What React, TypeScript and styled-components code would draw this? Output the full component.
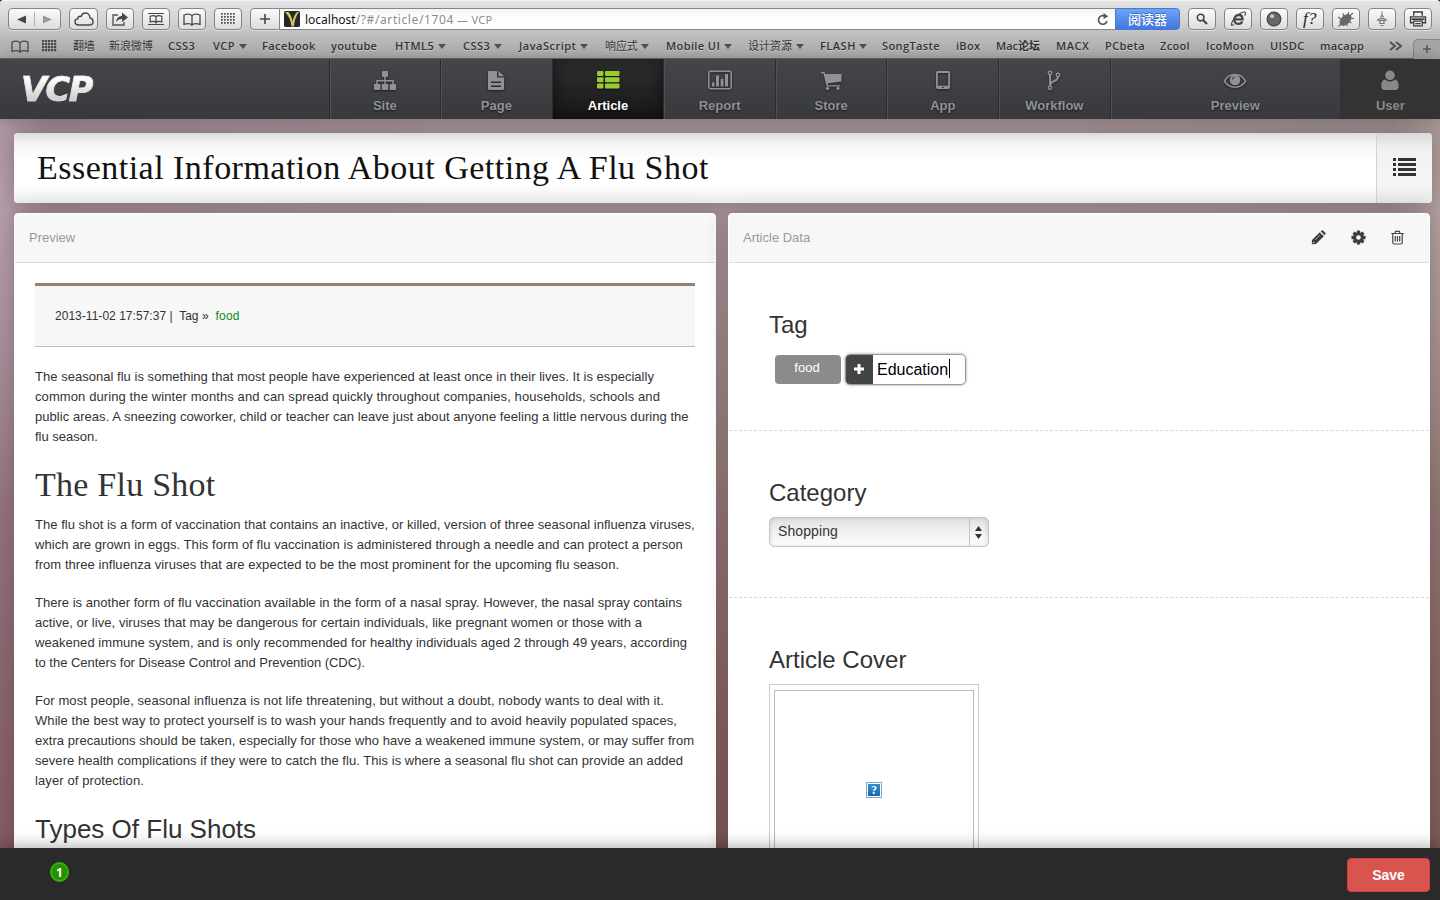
import React from "react";
import styled, { createGlobalStyle, css } from "styled-components";

const GlobalStyle = createGlobalStyle`
  * { box-sizing: border-box; }
  body { margin: 0; background: #2a2a2a; font-family: "Liberation Sans", Helvetica, Arial, sans-serif; color: #333; overflow: hidden; }
  svg { display: block; }
`;

const Page = styled.div`
  width: 1440px;
  height: 900px;
  display: flex;
  flex-direction: column;
  overflow: hidden;
`;

/* ---------- browser chrome ---------- */
const Chrome = styled.div`
  height: 59px;
  flex: none;
  background: linear-gradient(#e6e6e6 0, #d2d2d2 22px, #b9b9b9 38px, #adadad 57px);
  border-bottom: 1px solid #66676a;
  border-radius: 4px 4px 0 0;
  box-shadow: inset 0 1px #f2f2f2;
`;
const Toolbar = styled.div`
  height: 36px;
  padding: 8px 8px 0;
  display: flex;
  align-items: flex-start;
`;
const ToolButton = styled.div<{ $w?: number; $gap?: number }>`
  width: ${(p) => p.$w ?? 28}px;
  height: 22px;
  margin-right: ${(p) => p.$gap ?? 8}px;
  flex: none;
  display: flex;
  align-items: center;
  justify-content: center;
  border: 1px solid #858585;
  border-radius: 4px;
  background: linear-gradient(#fbfbfb, #dcdcdc);
  box-shadow: 0 1px rgba(255, 255, 255, 0.45);
  color: #444;
`;
const NavHalf = styled.div`
  flex: 1;
  height: 14px;
  display: flex;
  align-items: center;
  justify-content: center;
  & + & { border-left: 1px solid #b0b0b0; }
`;
const AddButton = styled(ToolButton)`
  border-radius: 4px 0 0 4px;
`;
const Address = styled.div`
  flex: 1;
  height: 22px;
  display: flex;
  align-items: center;
  padding: 0 6px 0 4px;
  border-top: 1px solid #858585;
  border-bottom: 1px solid #858585;
  background: linear-gradient(#f4f4f4, #fff 50%);
  font: 12px "Noto Sans", "Open Sans", sans-serif;
  color: #8c8c8c;
  white-space: pre;
`;
const Host = styled.span`
  color: #111;
  margin-left: 5px;
`;
const Path = styled.span<{ $small?: boolean }>`
  flex: ${(p) => (p.$small ? 1 : "none")};
  font-size: ${(p) => (p.$small ? 11 : 12)}px;
  letter-spacing: ${(p) => (p.$small ? 0.3 : 0.6)}px;
`;
const Reader = styled.div`
  width: 65px;
  height: 22px;
  margin-right: 8px;
  border: 1px solid #4a78cc;
  border-radius: 0 4px 4px 0;
  background: linear-gradient(#6ea3f5, #3f78e0);
  color: #fff;
  font: 500 13px/20px "Noto Sans CJK SC", sans-serif;
  text-align: center;
  text-shadow: 0 -1px rgba(30, 60, 140, 0.5);
`;
const Bookmarks = styled.div`
  height: 22px;
  display: flex;
  padding-left: 11px;
  font: 600 11px/20px "Open Sans", "Noto Sans CJK SC", sans-serif;
  color: #333;
  text-shadow: 0 1px rgba(255, 255, 255, 0.4);
`;
const Bookmark = styled.div<{ $w: number; $ls?: number; $cjk?: boolean }>`
  width: ${(p) => p.$w}px;
  flex: none;
  display: flex;
  align-items: center;
  height: 20px;
  white-space: nowrap;
  font-weight: ${(p) => (p.$cjk ? 400 : 600)};
  letter-spacing: ${(p) => p.$ls ?? 0.2}px;
`;
const Caret = styled.span`
  margin-left: 3.5px;
  border: 4px solid transparent;
  border-top: 5px solid #505050;
  border-bottom: 0;
`;
const NewTab = styled.div`
  flex: 1;
  height: 20px;
  margin-top: 3px;
  padding-bottom: 2px;
  border: 1px solid #858585;
  border-right: 0;
  border-bottom: 0;
  border-radius: 5px 0 0 0;
  background: #a5a5a5;
  display: flex;
  align-items: center;
  justify-content: center;
`;

/* ---------- application header ---------- */
const Header = styled.header`
  height: 60px;
  flex: none;
  display: flex;
  background: linear-gradient(#454649, #38393c);
  position: relative;
  z-index: 2;
  box-shadow: 0 0 14px rgba(0, 0, 0, 0.25);
`;
const Brand = styled.div`
  width: 328.5px;
  padding: 6px 0 0 21px;
`;
const Logo = styled.span`
  display: inline-block;
  font: italic 700 33.5px/50px "DejaVu Sans", sans-serif;
  letter-spacing: -1.4px;
  padding-right: 6px;
  color: transparent;
  background: linear-gradient(#fff 13px, #c4c4c4 39px);
  background-clip: text;
  -webkit-background-clip: text;
  -webkit-text-stroke: 0.6px rgba(230, 230, 230, 0.9);
`;
const NavItem = styled.div<{ $w?: number; $shift?: number; $active?: boolean; $user?: boolean }>`
  width: ${(p) => p.$w ?? 111.6}px;
  flex: none;
  display: flex;
  flex-direction: column;
  align-items: center;
  padding: 11px 0 0 ${(p) => p.$shift ?? 0}px;
  border-left: 1px solid #2b2c2e;
  box-shadow: inset 1px 0 #505154;
  color: #909198;
  font-size: 13px;
  font-weight: 700;
  text-shadow: 0 1px 2px rgba(0, 0, 0, 0.6);
  svg { filter: drop-shadow(0 1px 1px rgba(0, 0, 0, 0.5)); }
  span { line-height: 16px; margin-top: 6px; }
  ${(p) =>
    p.$active &&
    css`
      background: linear-gradient(#303032, #171718);
      box-shadow: inset 0 0 16px rgba(0, 0, 0, 0.55);
      color: #9c3;
      span { color: #fff; }
    `}
  ${(p) =>
    p.$user &&
    css`
      background: #333;
      border-left-color: #333;
      box-shadow: none;
      color: #888;
      text-shadow: none;
      svg { filter: none; }
    `}
`;

/* ---------- workspace ---------- */
const Workspace = styled.main`
  height: 729px;
  flex: none;
  padding: 14px 8px 0 14px;
  overflow: hidden;
  background:
    radial-gradient(ellipse 50px 300px at 0 90px, rgba(196, 176, 194, 0.55), transparent),
    radial-gradient(ellipse 50px 300px at 1440px 90px, rgba(190, 172, 172, 0.6), transparent),
    linear-gradient(90deg, rgba(140, 95, 135, 0.24), transparent 30%, transparent 75%, rgba(110, 100, 70, 0.16)),
    linear-gradient(#a49498 0, #ac999c 90px, #a08b8b 240px, #97807c 345px, #957579 415px, #8b6866 560px, #825b59 729px);
`;
const TitleCard = styled.div`
  height: 70px;
  display: flex;
  border-radius: 4px;
  overflow: hidden;
  background: #fff;
  box-shadow: 0 0 22px rgba(40, 20, 30, 0.26);
`;
const TitleText = styled.h1`
  flex: 1;
  margin: 0;
  padding-left: 23px;
  font: 400 34px/70px "Liberation Serif", serif;
  letter-spacing: 0.48px;
  color: #111;
  white-space: nowrap;
  background: linear-gradient(#dedede, #f4f4f4 12px, #fff 28px, #fff 50px, #efefef);
`;
const ListButton = styled.div`
  width: 56px;
  border-left: 1px solid #d2d2d2;
  background: linear-gradient(#d9d9d9, #f1f1f1 16px, #f5f5f5 50px, #e8e8e8);
  display: flex;
  justify-content: center;
  padding-top: 25px;
`;
const Columns = styled.div`
  display: flex;
  gap: 12px;
  margin-top: 10px;
`;
const Panel = styled.section`
  width: 702px;
  height: 680px;
  border: 1px solid #fff;
  border-radius: 4px;
  background: #fff;
  box-shadow: 0 0 22px rgba(40, 20, 30, 0.24);
`;
const PanelHead = styled.div`
  height: 49px;
  padding: 0 24px 2px 14px;
  display: flex;
  align-items: center;
  background: #f7f7f7;
  border-bottom: 1px solid #ddd;
  border-radius: 4px 4px 0 0;
  font-size: 13px;
  color: #999;
`;
const PanelTitle = styled.span`
  flex: 1;
`;
const Actions = styled.div`
  display: flex;
  gap: 24.5px;
`;
const Article = styled.div`
  padding: 20px;
  font-size: 13px;
  line-height: 20px;
`;
const Meta = styled.div`
  height: 64px;
  padding: 20px;
  margin-bottom: 20px;
  border-top: 3px solid #968070;
  border-bottom: 1px solid #c8b8aa;
  background: #f7f7f7;
  font-size: 12px;
  line-height: 20px;
  letter-spacing: 0.03px;
  white-space: pre;
`;
const TagLink = styled.span`
  color: #0a8a16;
  letter-spacing: 0.25px;
`;
const Para = styled.p`
  margin: 0 0 18px;
`;
const Line = styled.span<{ $ls: number }>`
  display: block;
  white-space: nowrap;
  letter-spacing: ${(p) => p.$ls}px;
`;
const Heading = styled.h2`
  margin: 0 0 8px;
  font: 400 34px/40px "Liberation Serif", serif;
  letter-spacing: 0.25px;
  padding-bottom: 2px;
`;
const SubHeading = styled.h3`
  margin: 0;
  padding-top: 3px;
  font-weight: 400;
  font-size: 26px;
  line-height: 34px;
`;
const Block = styled.div`
  height: 167px;
  padding: 48px 40px 0;
  border-bottom: 1px dashed #d8d8d8;
`;
const FirstBlock = styled(Block)`
  height: 168px;
`;
const CoverBlock = styled(Block)`
  height: 250px;
  border: 0;
`;
const BlockTitle = styled.h3`
  margin: 0;
  font-weight: 400;
  font-size: 24px;
  line-height: 28px;
`;
const TagRow = styled.div`
  display: flex;
  padding: 15px 0 0 6px;
  gap: 4px;
`;
const TagPill = styled.div`
  width: 66px;
  height: 29px;
  margin-top: 1px;
  padding-right: 2px;
  border-radius: 4px;
  background: #8b8b8b;
  color: #fff;
  font-size: 13px;
  line-height: 25px;
  text-align: center;
`;
const TagInput = styled.div`
  width: 121px;
  height: 31px;
  display: flex;
  border: 1px solid #999;
  border-radius: 5px;
  overflow: hidden;
  box-shadow: 0 0 3px rgba(0, 0, 0, 0.4);
  font-size: 16px;
  line-height: 30px;
  color: #000;
`;
const PlusCell = styled.div`
  width: 27px;
  margin-right: 4px;
  padding: 0 2px 1px 0;
  background: #444;
  display: flex;
  align-items: center;
  justify-content: center;
`;
const Cursor = styled.span`
  width: 1px;
  height: 19px;
  margin: 4px 0 0 1px;
  background: #000;
`;
const Select = styled.div`
  width: 220px;
  height: 30px;
  margin-top: 10px;
  padding-left: 8px;
  display: flex;
  border: 1px solid #c4c4c4;
  border-radius: 5px;
  background: linear-gradient(#e2e2e2, #fff);
  box-shadow: inset 0 0 5px rgba(0, 0, 0, 0.14);
  font-size: 14px;
  line-height: 27px;
`;
const SelectValue = styled.span`
  flex: 1;
  letter-spacing: 0.1px;
`;
const Stepper = styled.div`
  width: 19px;
  padding-right: 1px;
  border-left: 1px solid #c4c4c4;
  display: flex;
  align-items: center;
  justify-content: center;
`;
const Cover = styled.div`
  width: 210px;
  height: 212px;
  margin-top: 10px;
  padding: 5px 4px;
  border: 1px solid #ccc;
`;
const CoverInner = styled.div`
  height: 200px;
  border: 1px solid #bbb;
  display: flex;
  align-items: center;
  justify-content: center;
`;
const Missing = styled.div`
  width: 16px;
  height: 16px;
  border: 1px solid #7da7d6;
  outline: 1px solid #fff;
  outline-offset: -2px;
  background: linear-gradient(#3292d2, #1b66a8);
  color: #fff;
  font: 700 12px/14px "Liberation Serif", serif;
  text-align: center;
`;
const Footer = styled.footer`
  height: 52px;
  flex: none;
  position: relative;
  z-index: 2;
  padding: 10px 10px 0 50px;
  display: flex;
  justify-content: space-between;
  background: #2a2a2a;
  box-shadow: 0 0 18px rgba(0, 0, 0, 0.38);
`;
const Count = styled.div`
  width: 19px;
  height: 20px;
  margin-top: 4px;
  border: 2px solid #32b20c;
  border-radius: 50%;
  background: #259000;
  color: #fff;
  font: 700 12px/17px "Open Sans", sans-serif;
  text-align: center;
`;
const Save = styled.div`
  width: 83px;
  height: 34px;
  border: 1px solid #d43f3a;
  border-radius: 4px;
  background: #d9534f;
  color: #fff;
  font-size: 14px;
  font-weight: 700;
  line-height: 32px;
  text-align: center;
`;

/* ---------- icons ---------- */
const BookIcon = () => (
  <svg width="18" height="13" viewBox="0 0 18 13" fill="none" stroke="#484848" strokeWidth="1.3">
    <path d="M9 12C7.5 10.4 5 10.2 1 11.4V2C5 .6 7.5 1 9 2.8C10.5 1 13 .6 17 2V11.4C13 10.2 10.5 10.4 9 12V2.8" />
  </svg>
);
const DotGrid = () => (
  <svg width="14" height="12" fill="#484848">
    {Array.from({ length: 20 }, (_, i) => (
      <rect key={i} x={(i % 5) * 3} y={Math.floor(i / 5) * 3} width="1.7" height="1.7" />
    ))}
  </svg>
);
const TopSitesIcon = () => (
  <svg width="16" height="12" fill="#484848">
    {Array.from({ length: 20 }, (_, i) => (
      <rect key={i} x={(i % 5) * 3 + 1} y={Math.floor(i / 5) * 3} width="2.2" height="2.2" />
    ))}
  </svg>
);
const Plus = ({ s = 10, w = 2, c = "#484848" }: { s?: number; w?: number; c?: string }) => (
  <svg width={s} height={s} viewBox="0 0 10 10" stroke={c} strokeWidth={w}>
    <path d="M5 0V10M0 5H10" />
  </svg>
);
const CloudIcon = () => (
  <svg width="20" height="14" viewBox="0 0 20 14" fill="none" stroke="#444" strokeWidth="1.4">
    <path d="M5 13C2.5 13 1 11.6 1 9.8C1 8.2 2.2 7 3.8 6.9C3.5 5 5.5 3.6 7.1 4.5C7.8 2.2 9.5 1 11.5 1C14.2 1 16 3 15.9 5.9C18 6.2 19 7.6 19 9.4C19 11.5 17.5 13 15.3 13Z" />
  </svg>
);
const ShareIcon = () => (
  <svg width="18" height="14" viewBox="0 0 18 14" fill="none" stroke="#777" strokeWidth="1.8">
    <path d="M7 3H2V13H13V10" />
    <path d="M5 10C5.5 6 8 4 11 4V.5L17 5.5L11 10V7C8.5 7 6.5 8 5 10Z" fill="#484848" stroke="none" />
  </svg>
);
const ReadingIcon = () => (
  <svg width="16" height="14" viewBox="0 0 16 14" fill="none" stroke="#484848" strokeWidth="1.2">
    <path d="M0 1.5H16M0 12.5H16M8 10.5C7 9.3 5 9.1 2.2 9.9V4.2C5 3.3 7 3.5 8 4.8C9 3.5 11 3.3 13.8 4.2V9.9C11 9.1 9 9.3 8 10.5V4.8" />
  </svg>
);
const Favicon = () => (
  <svg width="16" height="16" viewBox="0 0 16 16">
    <rect width="16" height="16" rx="1.5" fill="#25272b" />
    <path d="M1 1H4.5C7 4 8 7 8.6 10.5C9.2 7 10.5 3.5 13 1H15C12 5 10.5 9.5 10 15.5H7.5C7 10 5 5 1 1Z" fill="#cfc45c" />
  </svg>
);
const ReloadIcon = () => (
  <svg width="12" height="13" viewBox="0 0 12 13" fill="none" stroke="#555" strokeWidth="1.6">
    <path d="M10 8A4.3 4.3 0 1 1 8 3.2" />
    <path d="M6.5 0L11.3 3.3L6.6 6Z" fill="#555" stroke="none" />
  </svg>
);
const SearchIcon = () => (
  <svg width="12" height="12" viewBox="0 0 12 12" fill="none" stroke="#444">
    <circle cx="4.6" cy="4.6" r="3.3" strokeWidth="1.6" />
    <path d="M7 7L11 11" strokeWidth="2.2" />
  </svg>
);
const IeIcon = () => (
  <svg width="17" height="16" viewBox="0 0 17 16" fill="none" stroke="#484848">
    <path d="M4.5 8.3H12.5C12.5 5.5 10.8 4 8.7 4C6.2 4 4.3 6 4.3 8.7C4.3 11 6 12.8 8.5 12.8C10.3 12.8 11.7 11.9 12.3 10.5" strokeWidth="2.3" />
    <path d="M4 13C1.5 15.8 .5 14.5 2.2 10.8C4.5 6 11 .5 14.5 1C16 1.2 15.7 3 14.7 4.8" strokeWidth="1.1" />
  </svg>
);
const BallIcon = () => (
  <svg width="16" height="16" viewBox="0 0 17 17">
    <circle cx="8.5" cy="8.5" r="8" fill="#4b4b4b" />
    <circle cx="8.5" cy="8.5" r="6.5" fill="#686868" />
    <ellipse cx="6.5" cy="5.5" rx="2.3" ry="2" fill="#c5c5c5" />
  </svg>
);
const FontGlyph = styled.span`
  font: italic 400 17px/18px "Liberation Serif", serif;
  color: #222;
  letter-spacing: 0.5px;
`;
const BugIcon = () => (
  <svg width="18" height="17" viewBox="0 0 18 17" stroke="#666">
    <ellipse cx="8.5" cy="9" rx="6.5" ry="4" transform="rotate(-42 8.5 9)" fill="#686868" />
    <path d="M12.5 5L16 2M11 5L11.5 1M13 7L17 7.5M4 8L1 6M7 6L6 2.5M11 10L14.5 12M9 12L10.5 15M4 13L1.5 15.5" strokeWidth="1.2" />
  </svg>
);
const LampIcon = () => (
  <svg width="12" height="16" viewBox="0 0 12 16" fill="none" stroke="#777">
    <path d="M6 .5V3M4.5 6L6 3.5L7.5 6Z" />
    <path d="M1 9.5C3 7 9 7 11 9.5M2.5 9.5H9.5M4 10V12.5H8V10M4.5 14.5H7.5" strokeWidth="1.2" />
  </svg>
);
const PrinterIcon = () => (
  <svg width="18" height="16" viewBox="0 0 16 15" fill="none" stroke="#3d3d3d" strokeWidth="1.3">
    <path d="M4 4.5V1H12V4.5" />
    <path d="M4 11H1V5.5H15V11H12" />
    <path d="M2 7.7H14" strokeWidth="1.6" />
    <path d="M4 9.5H12V14H4ZM5.5 11.8H10.5" strokeWidth="1.1" />
  </svg>
);
const SitemapIcon = () => (
  <svg width="24" height="22" viewBox="0 0 24 22" fill="currentColor">
    <rect x="9" y="1" width="6" height="6" rx="1" />
    <rect x="1" y="14" width="6.5" height="6" rx="1" />
    <rect x="8.8" y="14" width="6.5" height="6" rx="1" />
    <rect x="16.6" y="14" width="6.5" height="6" rx="1" />
    <path d="M12 7V14M4 14.5V10.8H20V14.5" fill="none" stroke="currentColor" strokeWidth="1.5" />
  </svg>
);
const FileIcon = () => (
  <svg width="18" height="22" viewBox="0 0 18 22" fill="currentColor">
    <path fillRule="evenodd" d="M2 1H10V7.5H17V18.5Q17 20 15.500 20H2.500Q1 20 1 18.500V2Q1 1 2 1ZM4 11.500V13H14V11.500ZM4 15.500V17H14V15.500Z" />
    <path d="M11.5 1L17 6.2H11.5Z" />
  </svg>
);
const ThListIcon = () => (
  <svg width="24" height="22" viewBox="0 0 24 22" fill="currentColor">
    {[1, 7.2, 13.4].map((y) => (
      <React.Fragment key={y}>
        <rect x="1" y={y} width="6.5" height="5" rx="1" />
        <rect x="9" y={y} width="14.5" height="5" rx="1" />
      </React.Fragment>
    ))}
  </svg>
);
const ReportIcon = () => (
  <svg width="24" height="22" viewBox="0 0 24 22" fill="currentColor">
    <rect x=".8" y="1.3" width="22.4" height="17.5" rx="2" fill="none" stroke="currentColor" strokeWidth="1.5" />
    <path d="M4 12.500H6.500V16.500H4ZM8 5.500H11V16.500H8ZM12.700 9H15.500V16.500H12.700ZM17 4H20V16.500H17Z" />
  </svg>
);
const CartIcon = () => (
  <svg width="22" height="22" viewBox="0 0 22 22" fill="currentColor">
    <path d="M1 2H4.5L5.3 4H21.500V11.500L7.500 13.500L8 15.200H20V16.600H6.500L3.500 3.600H1Z" />
    <circle cx="7.5" cy="18.4" r="1.6" />
    <circle cx="18" cy="18.4" r="1.6" />
  </svg>
);
const TabletIcon = () => (
  <svg width="16" height="22" viewBox="0 0 16 22" fill="currentColor">
    <path fillRule="evenodd" d="M3 1H13Q15 1 15 3V17Q15 19 13 19H3Q1 19 1 17V3Q1 1 3 1ZM2.800 3V15.700H13.200V3ZM7.200 16.700V18H8.800V16.700Z" />
  </svg>
);
const BranchIcon = () => (
  <svg width="14" height="22" viewBox="0 0 14 22" fill="none" stroke="currentColor" strokeWidth="1.4">
    <circle cx="3" cy="3" r="1.7" />
    <circle cx="3" cy="17.700" r="1.7" />
    <circle cx="11" cy="5" r="1.7" />
    <path d="M3 5V15.700M11 7C11 12 4 10 3.300 14.800" strokeWidth="2" />
  </svg>
);
const EyeIcon = () => (
  <svg width="24" height="22" viewBox="0 0 24 22" fill="none" stroke="currentColor" strokeWidth="1.6">
    <path d="M1.5 11.2C6 2.200 18 2.200 22.500 11.200C18 19.200 6 19.200 1.500 11.200Z" />
    <circle cx="12" cy="10" r="5.3" fill="currentColor" stroke="none" />
    <path d="M9.300 9.700A2.700 2.700 0 0 1 12 7" stroke="#3c3d40" strokeWidth="1" />
  </svg>
);
const UserIcon = () => (
  <svg width="20" height="22" viewBox="0 0 20 22" fill="currentColor">
    <circle cx="10" cy="5.3" r="4.8" />
    <path d="M5.500 9.500C7.500 12.300 12.500 12.300 14.500 9.500C17.500 9.500 18.700 12.500 18.700 16.500C18.700 18.800 17.500 20 15.500 20H4.500C2.500 20 1.300 18.800 1.300 16.500C1.300 12.500 2.500 9.500 5.500 9.500Z" />
  </svg>
);
const MenuListIcon = () => (
  <svg width="23" height="18" fill="#333">
    {[0, 5, 10, 15].map((y) => (
      <path key={y} d={`M0 ${y}H3V${y + 3}H0ZM5 ${y}H23V${y + 3}H5Z`} />
    ))}
  </svg>
);
const PencilIcon = () => (
  <svg width="15" height="15" viewBox="0 0 15 15" fill="#3c3c3c">
    <path d="M.8 14.2L1 10L8.8 2.2L12.8 6.2L5 14Z" />
    <path d="M9.7 1.3L10.7 .5Q11.5 0 12.3 .7L14.3 2.7Q15 3.5 14.3 4.3L13.6 5.2Z" />
    <path d="M4 10L9.7 4.3" stroke="#aaa" strokeWidth=".8" />
    <path d="M2 11.5L3.5 13L2 13.2Z" fill="#f7f7f7" />
  </svg>
);
const GearIcon = () => (
  <svg width="15" height="15" viewBox="-7.5 -7.5 15 15" fill="#3c3c3c">
    {[0, 45, 90, 135].map((a) => (
      <rect key={a} x="-1.7" y="-7" width="3.4" height="14" rx=".5" transform={`rotate(${a})`} />
    ))}
    <circle r="5.2" />
    <circle r="2.3" fill="#f7f7f7" />
  </svg>
);
const TrashIcon = () => (
  <svg width="15" height="15" viewBox="0 0 15 15" fill="none" stroke="#444" strokeWidth="1.2">
    <path d="M1.3 3.5H13.7M5 3.3L5.5 1.3H9.5L10 3.3M2.8 3.5V12.5Q2.8 14 4.2 14H10.8Q12.2 14 12.2 12.5V3.5M5.3 6V11.5M7.5 6V11.5M9.7 6V11.5" />
  </svg>
);
const Triangle = ({ left, c }: { left?: boolean; c: string }) => (
  <svg width="9" height="9" fill={c}>
    <path d={left ? "M0 4.5L9 .5V8.500Z" : "M9 4.5L0 .5V8.500Z"} />
  </svg>
);

const bookmarks: { t: string; w: number; menu?: boolean; ls?: number; cjk?: boolean }[] = [
  { t: "翻墙", w: 36, ls: -0.2, cjk: true },
  { t: "新浪微博", w: 59, ls: -0.1, cjk: true },
  { t: "CSS3", w: 45, ls: 0.5 },
  { t: "VCP", w: 49, menu: true, ls: 0.5 },
  { t: "Facebook", w: 69, ls: 0.4 },
  { t: "youtube", w: 64, ls: 0.3 },
  { t: "HTML5", w: 68, menu: true, ls: 0.5 },
  { t: "CSS3", w: 56, menu: true, ls: 0.5 },
  { t: "JavaScript", w: 86, menu: true, ls: 0.5 },
  { t: "响应式", w: 61, menu: true, ls: -0.1, cjk: true },
  { t: "Mobile UI", w: 82, menu: true, ls: 0.4 },
  { t: "设计资源", w: 72, menu: true, ls: 0, cjk: true },
  { t: "FLASH", w: 62, menu: true, ls: 0.5 },
  { t: "SongTaste", w: 74, ls: 0.4 },
  { t: "iBox", w: 40, ls: 0.3 },
  { t: "Mac论坛", w: 60, ls: 0 },
  { t: "MACX", w: 49, ls: 0.5 },
  { t: "PCbeta", w: 55, ls: 0.4 },
  { t: "Zcool", w: 46, ls: 0.3 },
  { t: "IcoMoon", w: 64, ls: 0.3 },
  { t: "UISDC", w: 50, ls: 0.4 },
  { t: "macapp", w: 69, ls: 0.3 },
];

const navItems = [
  { t: "Site", icon: <SitemapIcon /> },
  { t: "Page", icon: <FileIcon /> },
  { t: "Article", icon: <ThListIcon />, active: true },
  { t: "Report", icon: <ReportIcon /> },
  { t: "Store", icon: <CartIcon /> },
  { t: "App", icon: <TabletIcon /> },
  { t: "Workflow", icon: <BranchIcon /> },
];

type TextLine = [text: string, spacing: number];

const intro: TextLine[] = [
  ["The seasonal flu is something that most people have experienced at least once in their lives. It is especially", 0.03],
  ["common during the winter months and can spread quickly throughout companies, households, schools and", 0.1],
  ["public areas. A sneezing coworker, child or teacher can leave just about anyone feeling a little nervous during the", 0.047],
  ["flu season.", 0],
];
const body: TextLine[][] = [
  [
    ["The flu shot is a form of vaccination that contains an inactive, or killed, version of three seasonal influenza viruses,", 0.03],
    ["which are grown in eggs. This form of flu vaccination is administered through a needle and can protect a person", 0.057],
    ["from three influenza viruses that are expected to be the most prominent for the upcoming flu season.", 0.06],
  ],
  [
    ["There is another form of flu vaccination available in the form of a nasal spray. However, the nasal spray contains", 0.023],
    ["active, or live, viruses that may be dangerous for certain individuals, like pregnant women or those with a", 0.047],
    ["weakened immune system, and is only recommended for healthy individuals aged 2 through 49 years, according", 0.05],
    ["to the Centers for Disease Control and Prevention (CDC).", -0.03],
  ],
  [
    ["For most people, seasonal influenza is not life threatening, but without a doubt, nobody wants to deal with it.", 0.08],
    ["While the best way to protect yourself is to wash your hands frequently and to avoid heavily populated spaces,", 0.075],
    ["extra precautions should be taken, especially for those who have a weakened immune system, or may suffer from", 0.05],
    ["severe health complications if they were to catch the flu. This is where a seasonal flu shot can provide an added", 0.045],
    ["layer of protection.", 0.1],
  ],
];
const Lines = ({ lines }: { lines: TextLine[] }) => (
  <Para>
    {lines.map(([text, spacing]) => (
      <Line key={text} $ls={spacing}>{text}</Line>
    ))}
  </Para>
);

export default function App() {
  return (
    <Page>
      <GlobalStyle />
      <Chrome>
        <Toolbar>
          <ToolButton $w={53}>
            <NavHalf><Triangle left c="#444" /></NavHalf>
            <NavHalf><Triangle c="#999" /></NavHalf>
          </ToolButton>
          <ToolButton $w={29}><CloudIcon /></ToolButton>
          <ToolButton><ShareIcon /></ToolButton>
          <ToolButton><ReadingIcon /></ToolButton>
          <ToolButton><BookIcon /></ToolButton>
          <ToolButton><DotGrid /></ToolButton>
          <AddButton $w={30} $gap={0}><Plus w={1.6} /></AddButton>
          <Address>
            <Favicon />
            <Host>localhost</Host>
            <Path>/?#/article/1704</Path>
            <Path $small> — VCP</Path>
            <ReloadIcon />
          </Address>
          <Reader>阅读器</Reader>
          <ToolButton><SearchIcon /></ToolButton>
          <ToolButton><IeIcon /></ToolButton>
          <ToolButton><BallIcon /></ToolButton>
          <ToolButton><FontGlyph>f?</FontGlyph></ToolButton>
          <ToolButton><BugIcon /></ToolButton>
          <ToolButton><LampIcon /></ToolButton>
          <ToolButton $gap={0}><PrinterIcon /></ToolButton>
        </Toolbar>
        <Bookmarks>
          <Bookmark $w={30}><BookIcon /></Bookmark>
          <Bookmark $w={32}><TopSitesIcon /></Bookmark>
          {bookmarks.map((b, i) => (
            <Bookmark key={i} $w={b.w} $ls={b.ls} $cjk={b.cjk}>
              {b.t}
              {b.menu && <Caret />}
            </Bookmark>
          ))}
          <Bookmark $w={24}>
            <svg width="14" height="10" fill="none" stroke="#505050" strokeWidth="2">
              <path d="M1 1L6 5L1 9M7 1L12 5L7 9" />
            </svg>
          </Bookmark>
          <NewTab><Plus s={8} w={2} c="#5a5a5a" /></NewTab>
        </Bookmarks>
      </Chrome>
      <Header>
        <Brand><Logo>VCP</Logo></Brand>
        {navItems.map((n) => (
          <NavItem key={n.t} $active={n.active}>
            {n.icon}
            <span>{n.t}</span>
          </NavItem>
        ))}
        <NavItem $w={230.3} $shift={20}>
          <EyeIcon />
          <span>Preview</span>
        </NavItem>
        <NavItem $w={100} $user>
          <UserIcon />
          <span>User</span>
        </NavItem>
      </Header>
      <Workspace>
        <TitleCard>
          <TitleText>Essential Information About Getting A Flu Shot</TitleText>
          <ListButton><MenuListIcon /></ListButton>
        </TitleCard>
        <Columns>
          <Panel>
            <PanelHead>Preview</PanelHead>
            <Article>
              <Meta>
                2013-11-02 17:57:37 |{"  "}Tag »{"  "}
                <TagLink>food</TagLink>
              </Meta>
              <Lines lines={intro} />
              <Heading>The Flu Shot</Heading>
              {body.map((lines) => (
                <Lines key={lines[0][0]} lines={lines} />
              ))}
              <SubHeading>Types Of Flu Shots</SubHeading>
            </Article>
          </Panel>
          <Panel>
            <PanelHead>
              <PanelTitle>Article Data</PanelTitle>
              <Actions>
                <PencilIcon />
                <GearIcon />
                <TrashIcon />
              </Actions>
            </PanelHead>
            <FirstBlock>
              <BlockTitle>Tag</BlockTitle>
              <TagRow>
                <TagPill>food</TagPill>
                <TagInput>
                  <PlusCell><Plus w={3} c="#fff" /></PlusCell>
                  Education
                  <Cursor />
                </TagInput>
              </TagRow>
            </FirstBlock>
            <Block>
              <BlockTitle>Category</BlockTitle>
              <Select>
                <SelectValue>Shopping</SelectValue>
                <Stepper>
                  <svg width="7" height="13" fill="#333">
                    <path d="M3.5 0L7 5H0ZM3.5 13L0 8H7Z" />
                  </svg>
                </Stepper>
              </Select>
            </Block>
            <CoverBlock>
              <BlockTitle>Article Cover</BlockTitle>
              <Cover>
                <CoverInner><Missing>?</Missing></CoverInner>
              </Cover>
            </CoverBlock>
          </Panel>
        </Columns>
      </Workspace>
      <Footer>
        <Count>1</Count>
        <Save>Save</Save>
      </Footer>
    </Page>
  );
}
